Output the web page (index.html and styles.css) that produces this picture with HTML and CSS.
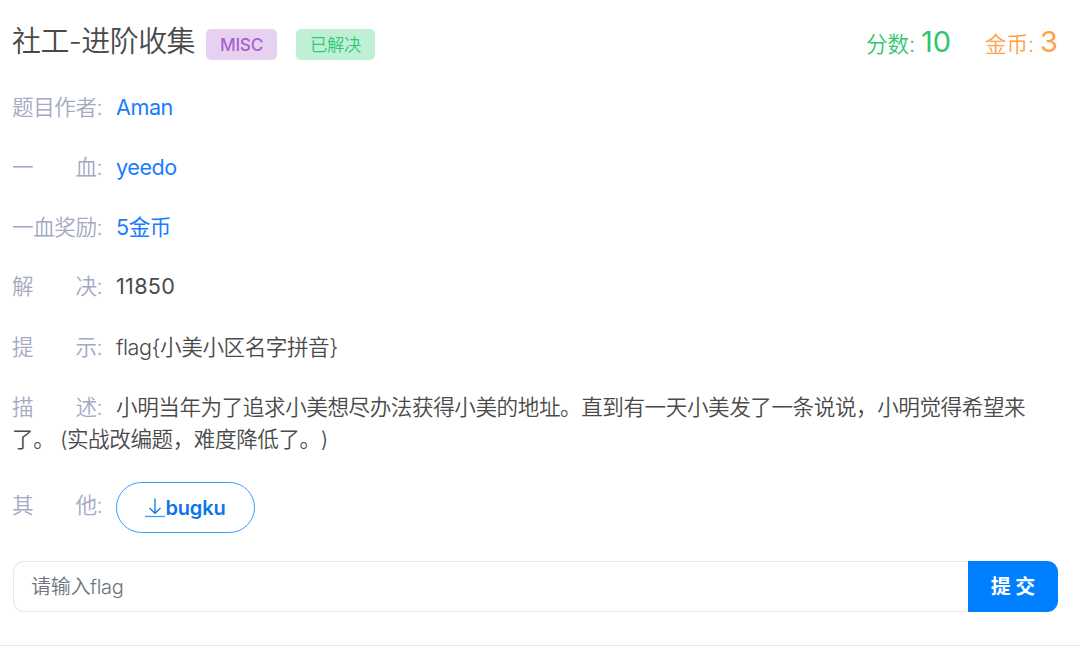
FILE: index.html
```html
<!DOCTYPE html>
<html lang="zh-CN">
<head>
  <meta charset="UTF-8" />
  <meta name="viewport" content="width=device-width, initial-scale=1.0"/>
  <title>社工-进阶收集</title>
  <link rel="stylesheet" href="styles.css">
</head>
<body>
  <div class="challenge">
    <header>
      <h1>社工-进阶收集</h1>
      <span class="badge badge-type">MISC</span>
      <span class="badge badge-solved">已解决</span>
      <div class="stats">
        <span class="score">分数: <b>10</b></span>
        <span class="coin">金币: <b>3</b></span>
      </div>
    </header>

    <div class="info">
      <p><span class="label">题目作者:</span><a href="#">Aman</a></p>
      <p><span class="label">一&emsp;&emsp;血:</span><a href="#">yeedo</a></p>
      <p><span class="label">一血奖励:</span><a href="#">5金币</a></p>
      <p><span class="label">解&emsp;&emsp;决:</span><span class="count">11850</span></p>
      <p><span class="label">提&emsp;&emsp;示:</span>flag{小美小区名字拼音}</p>
      <p><span class="label">描&emsp;&emsp;述:</span>小明当年为了追求小美想尽办法获得小美的地址。直到有一天小美发了一条说说，小明觉得希望来了。 (实战改编题，难度降低了。)</p>
    </div>

    <div class="attachment">
      <span class="label">其&emsp;&emsp;他:</span>
      <a class="download" href="#">
        <svg width="20" height="22" viewBox="0 0 20 22" fill="none" stroke="currentColor" stroke-width="1.3">
          <path d="M10 1.5V16M4.5 11L10 16.3L15.5 11"/>
          <path class="underline" d="M0 19.5H20"/>
        </svg>bugku</a>
    </div>

    <form class="flag-form" onsubmit="return false">
      <input type="text" placeholder="请输入flag">
      <button type="submit">提 交</button>
    </form>
  </div>
</body>
</html>
```

FILE: styles.css
```css
:root {
  --text-color: #4a4a4a;
  --label-color: #a5a9c3;
  --link-color: #1a7cff;
  --primary: #0080ff;
}

* {
  box-sizing: border-box;
}

body {
  margin: 0;
  font-family: Inter, "Noto Sans CJK SC", sans-serif;
  font-size: 21.6px;
  font-weight: 350;
  line-height: 32px;
  letter-spacing: -0.45px;
  text-spacing-trim: space-all;
  color: var(--text-color);
  background: #fff;
  overflow: hidden;
}

a {
  color: var(--link-color);
  text-decoration: none;
}

.challenge {
  height: 646px;
  padding: 22px 22px 0 12px;
  border-bottom: 1px solid #e8e8e8;
}

header {
  display: flex;
  align-items: center;
  height: 40px;
}

h1 {
  margin: 0 11px 0 0;
  font-size: 29px;
  font-weight: 350;
  letter-spacing: -0.6px;
}

.badge {
  height: 31px;
  padding: 0 14px;
  margin: 4px 19px 0 0;
  border-radius: 5px;
  font-size: 17.3px;
  line-height: 31px;
}

.badge-type {
  background: #e6d2f0;
  color: #aa62cd;
  font-weight: 450;
  letter-spacing: -0.3px;
}

.badge-solved {
  background: #bfefd5;
  color: #2fc974;
  letter-spacing: -0.3px;
}

.stats {
  display: flex;
  gap: 34px;
  margin: 2px 0 0 auto;
}

.stats span {
  letter-spacing: -0.1px;
}

.stats b {
  font-size: 29px;
  font-weight: 400;
  letter-spacing: 0;
}

.score { color: #2fc571; }
.coin { color: #ff9f4a; }

.info {
  padding-top: 29px;
}

.info p {
  margin: 0 0 28px;
}

.info p:nth-child(3) {
  margin-bottom: 27px;
}

.info p:nth-child(4) {
  margin-bottom: 29px;
}

.info p:last-child {
  margin-bottom: 27px;
}

.info a {
  font-weight: 400;
}

.label {
  display: inline-block;
  width: 104px;
  white-space: nowrap;
  color: var(--label-color);
}

.count {
  font-weight: 400;
  letter-spacing: 0.3px;
}

.attachment {
  display: flex;
}

.attachment .label {
  padding-top: 7px;
}

.download {
  display: flex;
  align-items: center;
  justify-content: center;
  width: 139px;
  height: 51px;
  border: 1px solid #3c9bff;
  border-radius: 26px;
  color: #0f73e6;
  font-size: 20px;
  font-weight: 600;
  letter-spacing: -0.15px;
}

.download .underline {
  stroke: #3c9bff;
}

.flag-form {
  display: flex;
  height: 51px;
  margin: 28px 0 0 1px;
}

.flag-form input {
  flex: 1;
  min-width: 0;
  padding: 0 17px;
  border: 1px solid #e6e6e6;
  border-right: none;
  border-radius: 11px 0 0 11px;
  font: inherit;
  font-size: 20px;
  letter-spacing: -0.3px;
}

.flag-form input::placeholder {
  color: #6c757d;
}

.flag-form button {
  width: 90px;
  border: none;
  border-radius: 0 11px 11px 0;
  background: var(--primary);
  color: #fff;
  font: inherit;
  font-size: 20px;
  font-weight: 700;
}
```
